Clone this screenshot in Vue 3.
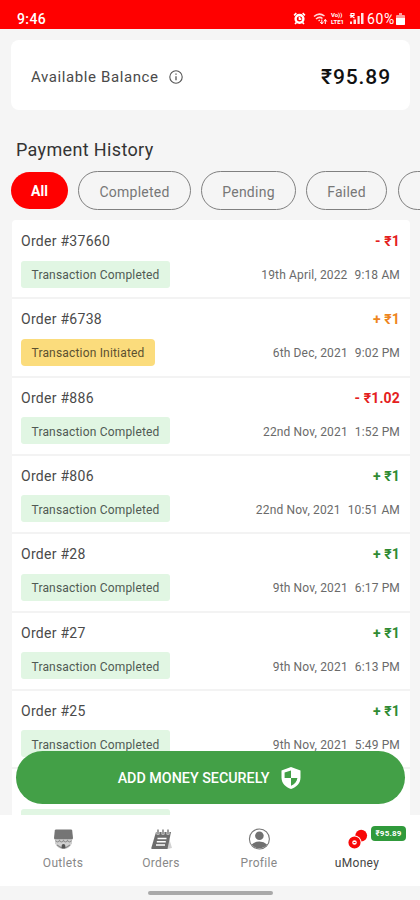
<script setup>
const filters = [
  { label: 'All', size: 'w-all', active: true },
  { label: 'Completed', size: 'w-completed' },
  { label: 'Pending', size: 'w-pending' },
  { label: 'Failed', size: 'w-failed' },
  { label: '', size: 'w-next' },
]
const orders = [
  { id: '37660', sign: '-', amount: '₹1', tone: 'debit', date: '19th April, 2022', time: '9:18 AM' },
  { id: '6738', sign: '+', amount: '₹1', tone: 'pending', date: '6th Dec, 2021', time: '9:02 PM', initiated: true },
  { id: '886', sign: '-', amount: '₹1.02', tone: 'debit', date: '22nd Nov, 2021', time: '1:52 PM' },
  { id: '806', sign: '+', amount: '₹1', tone: 'credit', date: '22nd Nov, 2021', time: '10:51 AM' },
  { id: '28', sign: '+', amount: '₹1', tone: 'credit', date: '9th Nov, 2021', time: '6:17 PM' },
  { id: '27', sign: '+', amount: '₹1', tone: 'credit', date: '9th Nov, 2021', time: '6:13 PM' },
  { id: '25', sign: '+', amount: '₹1', tone: 'credit', date: '9th Nov, 2021', time: '5:49 PM' },
]
</script>

<template>
  <div class="screen">
    <header class="status">
      <span class="clock">9:46</span>
      <div class="status-right">
        <svg class="alarm" viewBox="0 0 14 14" width="13" height="13">
          <circle cx="7" cy="7.400" r="4.200" fill="none" stroke="#fff" stroke-width="2.600" />
          <path d="M7 5v2.700h2M1.200 3.600 3.600 1.300M12.800 3.600l-2.400-2.300M2.200 13l1.500-1.700M11.800 13l-1.500-1.700" fill="none" stroke="#fff" stroke-width="1.800" />
        </svg>
        <svg class="wifi" viewBox="0 0 15 13" width="15" height="13">
          <path d="M1 4.500Q6 0 11.500 4M3 7Q6.500 4 9.500 6.500M5.500 9l1.500-1" fill="none" stroke="#ffd9d9" stroke-width="1.500" />
          <path d="M8.800 12V7.500M7.300 10l1.500 2 1.500-2M12.300 12V7.500M10.800 9.500l1.500-2 1.500 2" fill="none" stroke="#fff" stroke-width="1" />
        </svg>
        <div class="volte"><span>Vo))</span><span>LTE1</span></div>
        <svg class="signal" viewBox="0 0 15 13" width="15" height="13">
          <path d="M1 12V9.500h2V12zM4.500 12V7.500h2.500V12zM8.500 12V4h2.200v8zM12 12V1h2.500v11z" fill="#ffe3e3" />
          <path d="M2 6V1.500h3v2H2l3.500 2.500" fill="none" stroke="#fff" stroke-width="1.200" />
        </svg>
        <span class="percent">60%</span>
        <svg class="battery" viewBox="0 0 9 12" width="9" height="12">
          <path d="M3 0h3v2h2q1 0 1 1v8q0 1-1 1H1q-1 0-1-1V3q0-1 1-1h2z" fill="#ff9c9c" />
          <path d="M0 5h9v6q0 1-1 1H1q-1 0-1-1z" fill="#fff" />
        </svg>
      </div>
    </header>

    <main class="content">
      <section class="balance">
        <span class="balance-label">Available Balance</span>
        <svg class="info" viewBox="0 0 14 14" width="14" height="14">
          <circle cx="7" cy="7" r="6.200" fill="none" stroke="#555" stroke-width="1.100" />
          <path d="M7 6.200v4M7 3.500v1.300" stroke="#555" stroke-width="1.300" />
        </svg>
        <strong class="balance-value">₹95.89</strong>
      </section>

      <h1 class="title">Payment History</h1>

      <div class="filters">
        <button v-for="f in filters" :key="f.size" class="chip" :class="[f.size, { active: f.active }]">{{ f.label }}</button>
      </div>

      <section class="list">
        <article v-for="o in orders" :key="o.id" class="order">
          <div class="line top">
            <span class="order-id">Order #{{ o.id }}</span>
            <span class="amount" :class="o.tone">{{ o.sign }} {{ o.amount }}</span>
          </div>
          <div class="line bottom">
            <span v-if="o.initiated" class="badge initiated">Transaction Initiated</span>
            <span v-else class="badge">Transaction Completed</span>
            <span class="when"><span>{{ o.date }}</span><span>{{ o.time }}</span></span>
          </div>
        </article>
        <article class="order">
          <div class="line top"></div>
          <div class="line bottom"><span class="badge"></span></div>
        </article>
      </section>

      <button class="add">
        <span>ADD MONEY SECURELY</span>
        <svg viewBox="0 0 20 22" width="20" height="22">
          <path d="M10 0 19.500 3.400V10.500C19.500 16 15.500 20.400 10 22 4.500 20.400.5 16 .5 10.500V3.400z" fill="#fff" />
          <path d="M10 3.400V11H3.600V5.500zM10 11h6.400c-.4 3.600-2.900 6.500-6.400 7.800z" fill="#43a047" />
        </svg>
      </button>
    </main>

    <nav class="nav">
      <div class="tab">
        <svg viewBox="0 0 22 22" width="22" height="22">
          <path d="M3 12h17v3.500q-3 5.500-8.500 5.500T3 15.500z" fill="#d0d0d0" />
          <path d="M4 1.500h15q1 0 1.200 1l.8 7.500q0 1.500-1.500 1.500h-16Q2 11.500 2 10l.8-7.500q.2-1 1.200-1z" fill="#757575" />
          <path d="M3.500 12.500q2 3 4 0 2 3 4 0 2 3 4 0 2 3 4 0M5 17q6.500 5.500 13 0" fill="none" stroke="#8c8c8c" stroke-width="1.100" />
          <path d="M9.700 20.500v-2.700q0-1.800 1.800-1.800t1.800 1.800v2.700z" fill="#555" />
        </svg>
        <span>Outlets</span>
      </div>
      <div class="tab">
        <svg viewBox="0 0 22 22" width="22" height="22">
          <path d="M19 10 22 20l-5 1z" fill="#d2d2d2" />
          <path d="M6 4h15l-3.500 17H2q-.9 0-.7-1z" fill="#6d6d6d" />
          <path d="M8 1.500v5M13 1.500v5M18 1.500v5" stroke="#fff" stroke-width="2.800" />
          <path d="M8 1.500v4.500M13 1.500v4.500M18 1.500v4.500" stroke="#757575" stroke-width="1.400" />
          <path d="M7.500 10.500h9M6.800 13.700h9M6 17h9" stroke="#fff" stroke-width="1.400" />
        </svg>
        <span>Orders</span>
      </div>
      <div class="tab">
        <svg viewBox="0 0 22 22" width="22" height="22">
          <circle cx="11.400" cy="11" r="10" fill="#fff" stroke="#777" stroke-width="1.100" />
          <circle cx="11.400" cy="7.800" r="4.300" fill="#707070" />
          <path d="M3.700 16.500q3.200-3 7.700-3t7.700 3q-2.800 3.800-7.700 3.800t-7.700-3.800z" fill="#707070" />
        </svg>
        <span>Profile</span>
      </div>
      <div class="tab selected">
        <svg viewBox="0 0 22 22" width="22" height="22">
          <circle cx="15.200" cy="7.600" r="5.900" fill="#f80808" />
          <circle cx="8.500" cy="14.500" r="7" fill="#fff" />
          <circle cx="8.500" cy="14.500" r="4.200" fill="#fff" stroke="#f80808" stroke-width="3.800" />
          <path d="M7.500 14.500h2" stroke="#f80808" stroke-width="1" />
        </svg>
        <span>uMoney</span>
        <em class="money">₹95.89</em>
      </div>
    </nav>
    <footer class="gesture"><i></i></footer>
  </div>
</template>

<style>
body { margin: 0; background: #f5f5f5; }
</style>

<style scoped>
.screen { width: 420px; height: 900px; display: flex; flex-direction: column; overflow: hidden; background: #f5f5f5; font-family: Roboto, "Noto Sans", sans-serif; color: #4a4a4a; }
.screen * { box-sizing: border-box; }
button { font-family: inherit; padding: 0; margin: 0; }
.status { height: 29px; flex: none; background: #f00; display: flex; justify-content: space-between; align-items: center; padding: 8px 15px 0 17px; color: #fff; }
.clock { font-size: 14px; font-weight: 500; letter-spacing: .4px; }
.status-right { display: flex; align-items: center; }
.wifi { margin-left: 7px; }
.volte { display: flex; flex-direction: column; gap: 1px; margin-left: 3px; width: 16px; font-size: 6px; line-height: 6px; font-weight: 700; }
.volte span { height: 6px; }
.signal { margin-left: 2px; }
.percent { font-size: 14px; letter-spacing: .7px; margin-left: 3px; }
.battery { margin-left: 1px; }
.content { position: relative; height: 786px; flex: none; overflow: hidden; padding: 11px 10px 0 11px; }
.balance { height: 70px; background: #fff; border-radius: 8px; display: flex; align-items: center; padding: 3px 19px 0 20px; }
.balance-label { font-size: 15px; letter-spacing: .6px; }
.info { margin-left: 10.500px; }
.balance-value { margin-left: auto; font-size: 21px; font-weight: 500; letter-spacing: .9px; color: #111; }
.title { font-size: 18px; line-height: 24px; font-weight: 400; color: #333; margin: 28px 0 9px 5px; letter-spacing: .35px; }
.filters { display: flex; align-items: center; gap: 10px; width: 480px; height: 39px; }
.chip { flex: none; height: 39px; border: 1px solid #808080; border-radius: 20px; background: transparent; font-size: 14px; color: #777; letter-spacing: .25px; padding-top: 2px; }
.chip.active { height: 37px; border: 0; background: #f00; color: #fff; font-weight: 700; letter-spacing: 0; padding-top: 0; }
.w-all { width: 57px; }
.w-completed { width: 113px; }
.w-pending { width: 95px; }
.w-failed { width: 81px; }
.w-next { width: 100px; margin-left: 1px; }
.list { margin: 10px 0 0 1px; padding-top: 1px; background: #fff; border-radius: 4px 4px 0 0; }
.order { height: 78.330px; padding: 10px 10px 0 9px; border-bottom: 2px solid #f3f3f3; }
.line { display: flex; align-items: center; justify-content: space-between; }
.top { height: 20px; }
.order-id { font-size: 14px; letter-spacing: .28px; }
.amount { font-size: 14px; font-weight: 700; letter-spacing: .15px; }
.debit { color: #e42020; }
.pending { color: #ee8520; }
.credit { color: #2f8b33; }
.bottom { margin-top: 9px; height: 28px; }
.badge { width: 149px; height: 27px; border-radius: 3px; background: #e1f6e3; display: flex; align-items: center; padding: 2px 0 0 10.500px; font-size: 12px; letter-spacing: .18px; color: #505a53; white-space: nowrap; }
.badge.initiated { width: 134px; background: #fbdc7c; color: #5c5130; border-radius: 4px; }
.when { display: flex; gap: 7px; font-size: 12px; letter-spacing: .15px; color: #6a6a6a; padding-top: 2px; }
.add { position: absolute; left: 16px; bottom: 11px; width: 389px; height: 53px; border: 0; border-radius: 27px; background: #43a047; color: #fff; display: flex; align-items: center; justify-content: center; gap: 12px; padding: 1px 2px 0 0; font-size: 14.300px; font-weight: 500; }
.nav { height: 71px; flex: none; background: #fff; display: grid; grid-template-columns: repeat(4, 98px); padding: 13px 14px 0; }
.tab { position: relative; display: flex; flex-direction: column; align-items: center; color: #888; font-size: 12px; letter-spacing: .3px; line-height: 15px; gap: 6px; }
.tab.selected { color: #444; }
.money { position: absolute; left: 63px; top: -2px; width: 35px; height: 15px; border-radius: 4px; background: #309a3b; color: #fff; font-size: 8px; font-style: normal; font-weight: 700; line-height: 15px; text-align: center; letter-spacing: .2px; }
.gesture { height: 14px; display: flex; justify-content: center; padding-top: 5px; }
.gesture i { width: 125px; height: 4px; border-radius: 2px; background: #a9a9a9; }
</style>
